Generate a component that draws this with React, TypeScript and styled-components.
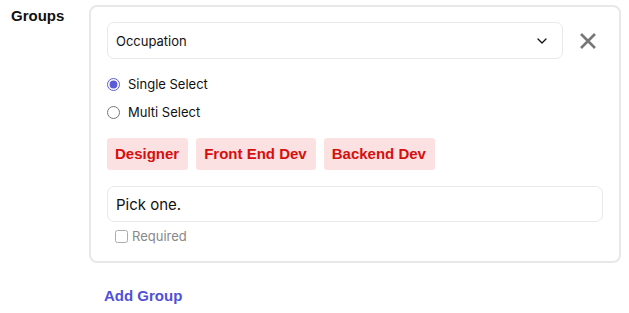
import React, { useState } from "react";
import styled, { createGlobalStyle } from "styled-components";

const GlobalStyle = createGlobalStyle`
  body {
    margin: 0;
    background: #ffffff;
    font-family: Inter, "Liberation Sans", sans-serif;
    color: #111;
  }
`;

const TAGS = ["Designer", "Front End Dev", "Backend Dev"];

const App = () => {
  const [mode, setMode] = useState<"single" | "multi">("single");
  const [required, setRequired] = useState(false);

  return (
    <>
      <GlobalStyle />
      <Page>
        <Label>Groups</Label>
        <Column>
          <Card>
            <SelectRow>
              <SelectBox>
                <span>Occupation</span>
                <svg width="12" height="12" viewBox="0 0 12 12" fill="none">
                  <path d="M2 4l4 4 4-4" stroke="#111" strokeWidth="1.3" strokeLinecap="round" strokeLinejoin="round" />
                </svg>
              </SelectBox>
              <RemoveButton aria-label="Remove group">
                <svg width="18" height="18" viewBox="0 0 18 18" fill="none">
                  <path d="M2 2l14 14M16 2L2 16" stroke="#777" strokeWidth="2.6" />
                </svg>
              </RemoveButton>
            </SelectRow>

            <Options>
              <Option>
                <Radio
                  type="radio"
                  name="mode"
                  checked={mode === "single"}
                  onChange={() => setMode("single")}
                />
                Single Select
              </Option>
              <Option>
                <Radio
                  type="radio"
                  name="mode"
                  checked={mode === "multi"}
                  onChange={() => setMode("multi")}
                />
                Multi Select
              </Option>
            </Options>

            <Tags>
              {TAGS.map((t) => (
                <Tag key={t}>{t}</Tag>
              ))}
            </Tags>

            <TextInput defaultValue="Pick one." />
            <RequiredRow>
              <Check
                type="checkbox"
                checked={required}
                onChange={() => setRequired(!required)}
              />
              Required
            </RequiredRow>
          </Card>
          <AddLink>Add Group</AddLink>
        </Column>
      </Page>
    </>
  );
};

export default App;

const Page = styled.div`
  display: flex;
  align-items: flex-start;
  padding: 5px 0 0 11px;
`;

const Label = styled.div`
  width: 78px;
  font-family: "Liberation Sans", Arial, sans-serif;
  font-weight: 700;
  font-size: 15px;
  line-height: 20px;
  margin-top: 1px;
  color: #111;
`;

const Column = styled.div`
  display: flex;
  flex-direction: column;
`;

const Card = styled.div`
  width: 532px;
  box-sizing: border-box;
  border: 2px solid #e8e8e8;
  border-radius: 8px;
  padding: 15px 16px 16px 16px;
  display: flex;
  flex-direction: column;
`;

const SelectRow = styled.div`
  display: flex;
  align-items: center;
  gap: 16px;
`;

const SelectBox = styled.div`
  width: 456px;
  height: 37px;
  box-sizing: border-box;
  border: 1px solid #e9e9e9;
  border-radius: 7px;
  display: flex;
  align-items: center;
  justify-content: space-between;
  padding: 0 14px 0 8px;
  font-size: 13px;
  color: #111;
`;

const RemoveButton = styled.button`
  border: none;
  background: none;
  padding: 0;
  display: flex;
  cursor: pointer;
`;

const Options = styled.div`
  display: flex;
  flex-direction: column;
  gap: 9px;
  margin-top: 16px;
`;

const Option = styled.label`
  display: flex;
  align-items: center;
  gap: 8px;
  font-size: 13px;
  line-height: 19px;
  color: #111;
`;

const Radio = styled.input`
  margin: 0;
  width: 13px;
  height: 13px;
  accent-color: #5b5bd6;
`;

const Tags = styled.div`
  display: flex;
  gap: 8px;
  margin-top: 16px;
`;

const Tag = styled.span`
  background: #fbe1e1;
  color: #d60f0f;
  font-family: "Liberation Sans", Arial, sans-serif;
  font-weight: 700;
  font-size: 15px;
  line-height: 32px;
  padding: 0 9px 0 8px;
  border-radius: 3px;
`;

const TextInput = styled.input`
  margin-top: 16px;
  height: 36px;
  box-sizing: border-box;
  border: 1px solid #e9e9e9;
  border-radius: 7px;
  padding: 0 8px;
  font-family: Inter, "Liberation Sans", sans-serif;
  font-size: 15px;
  color: #111;
  outline: none;
`;

const RequiredRow = styled.label`
  display: flex;
  align-items: center;
  gap: 4px;
  margin-top: 5px;
  padding-left: 8px;
  font-size: 13px;
  line-height: 18px;
  color: #888;
`;

const Check = styled.input`
  margin: 0;
  width: 13px;
  height: 13px;
  opacity: 0.6;
`;

const AddLink = styled.a`
  margin-top: 24px;
  margin-left: 15px;
  font-family: "Liberation Sans", Arial, sans-serif;
  font-weight: 700;
  font-size: 15px;
  color: #5050d8;
  cursor: pointer;
`;
